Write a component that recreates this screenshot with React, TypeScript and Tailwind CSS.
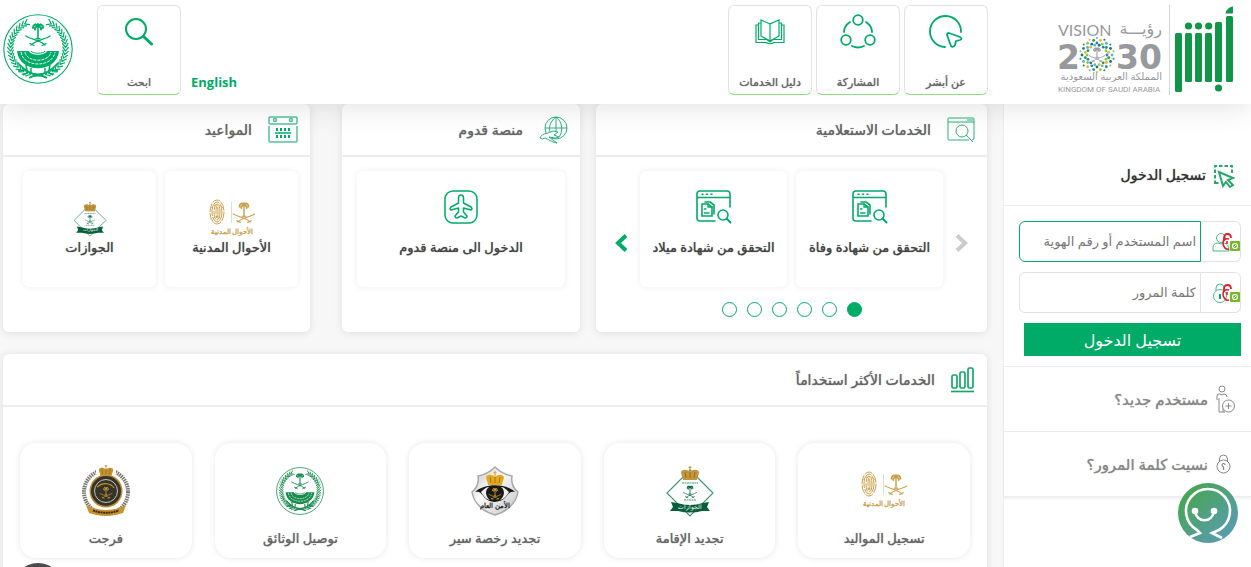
import React, { useState } from "react";
import type { ReactNode } from "react";

const GREEN = "#00ab67";

/* Palm over crossed swords, drawn in a 24x24 area centred on 0,0 */
const PalmSwords = ({ color, transform }: { color: string; transform?: string }) => (
  <g transform={transform} fill="none" stroke={color} strokeLinecap="round">
    <path d="M0 -7V4" strokeWidth="1.600" />
    <path
      d="M0 -8.500C-2 -12 -5 -10.500 -5 -7M0 -8.500C2 -12 5 -10.500 5 -7M0 -8.500C-2 -9 -3.500 -7 -3 -5.500M0 -8.500C2 -9 3.500 -7 3 -5.500M-2.500 -10.500L0 -8.500L2.500 -10.500M0 -8V-11"
      strokeWidth="2"
    />
    <path d="M-12 1C-8 4 1 5 7 10M12 1C8 4 -1 5 -7 10" strokeWidth="1.300" />
    <path d="M-8 8.500L-4 10.500M8 8.500L4 10.500M-2 3.600H2" strokeWidth="1.300" />
  </g>
);

const LEAVES = Array.from({ length: 19 }, (_, i) => 108 + i * 7.5);

const MinistryEmblem = ({ size, color }: { size: number; color: string }) => (
  <svg width={size} height={size} viewBox="0 0 70 70" fill="none" stroke={color}>
    <circle cx="35" cy="35" r="34.200" strokeWidth="1.100" />
    {[1, -1].map(side => (
      <g key={side} transform={side === 1 ? undefined : "matrix(-1 0 0 1 70 0)"}>
        {LEAVES.map(a => {
          const r = (a * Math.PI) / 180;
          return (
            <g key={a} transform={`translate(${35 + 27.5 * Math.cos(r)} ${34 + 27.5 * Math.sin(r)}) rotate(${a + 90})`}>
              <path d="M-1 0L3 -2.800M-1 0L3 2.800" strokeWidth="1.200" strokeLinecap="round" />
            </g>
          );
        })}
        <path d="M43 59C33 63 23 58 15 49M43 63C35 60 30 62 26 64M22 56L15 57M26 58L20 61M24 56L23 51M28 58L28 54" strokeWidth="1.500" />
      </g>
    ))}
    <PalmSwords color={color} transform="translate(35 21)" />
    <path d="M14 37H26C28 42 42 42 44 37H56C54 60 16 60 14 37Z" fill={color} stroke="none" />
    <path d="M18 38C20 54 50 54 52 38M22 38C24 49 46 49 48 38" stroke="#fff" strokeWidth="0.900" strokeDasharray="3 1" />
    <path d="M28 37C30 40 40 40 42 37" strokeWidth="1" />
  </svg>
);

const AbsherLogo = () => (
  <svg width="60" height="88" viewBox="0 0 60 88" role="img" aria-label="أبشر">
    <g fill="#119548">
      <rect x="1" y="28" width="7" height="59" rx="1.500" />
      <rect x="11" y="28" width="7" height="49" rx="1.500" />
      <rect x="21" y="28" width="7" height="49" rx="1.500" />
      <rect x="31" y="28" width="7" height="49" rx="1.500" />
      <rect x="41" y="17" width="7" height="60" rx="1.500" />
      <rect x="52" y="11" width="7" height="66" rx="1.500" />
      <path d="M51.500 8.500C52 5 55 2 59 1.500V7.500Q59 8.500 58 8.500Z" />
      <circle cx="14.500" cy="21" r="3.600" />
      <circle cx="24.500" cy="21" r="3.600" />
      <circle cx="34.700" cy="21" r="3.600" />
      <circle cx="44.500" cy="83" r="3.600" />
    </g>
  </svg>
);

const DOT_COLORS = ["#2f7fae", "#8dc63f", "#1c9a56", "#e9b23c", "#55b9c9", "#1f6f8d"];

const VisionLogo = () => (
  <svg width="106" height="76" viewBox="0 0 106 76" direction="ltr" role="img" aria-label="Vision 2030" fontFamily="'Noto Sans', 'DejaVu Sans', sans-serif">
    <g fill="#97999c">
      <text x="1" y="18" fontSize="16" fontFamily="Lato, sans-serif">VISION</text>
      <text x="105" y="16" fontSize="16" textAnchor="end">رؤيـــة</text>
      <text x="0" y="51" fontSize="33" fontWeight="700" fontFamily="'DejaVu Sans', sans-serif">2</text>
      <text x="59" y="51" fontSize="33" fontWeight="700" fontFamily="'DejaVu Sans', sans-serif">30</text>
      <text x="105" y="62" fontSize="10" textAnchor="end">المملكة العربية السعودية</text>
      <text x="1" y="74" fontSize="8" fontFamily="Roboto, sans-serif">KINGDOM OF SAUDI ARABIA</text>
    </g>
    {[10, 12, 15, 17].map((r, ring) =>
      Array.from({ length: 14 }, (_, i) => {
        const a = ((i + (ring % 2) / 2) * 2 * Math.PI) / 14;
        return (
          <circle
            key={`${r}-${i}`}
            cx={40 + r * Math.cos(a)}
            cy={37 + r * Math.sin(a)}
            r={ring === 3 ? 1 : 1.4}
            fill={DOT_COLORS[(i + ring * 2) % DOT_COLORS.length]}
          />
        );
      })
    )}
    <PalmSwords color="#97999c" transform="translate(40 37) scale(0.650)" />
  </svg>
);

const Crown = ({ color, transform }: { color: string; transform: string }) => (
  <g transform={transform}>
    <path d="M-7 5L-9 -1C-9 -5 -3 -5 0 -2C3 -5 9 -5 9 -1L7 5Z" fill={color} />
    <path d="M0 -8V-2M-1.500 -6.500H1.500" stroke={color} strokeWidth="1.200" />
    <path d="M-5 -2L-4 4M5 -2L4 4M0 -2V4" stroke="#8a5f1a" strokeWidth="0.700" />
    <path d="M-7 5H7" stroke={color} strokeWidth="2" />
  </g>
);

const CivilAffairsLogo = () => (
  <svg width="46" height="40" viewBox="0 0 46 40" direction="ltr" fill="none" stroke="#c9a04b">
    {[1, 3, 5, 7].map(r => (
      <ellipse key={r} cx="8" cy="13" rx={r} ry={r + 5} strokeWidth="1" strokeDasharray="9 1" />
    ))}
    <path d="M2 9C4 5 12 5 14 9M4 20C6 17 10 17 12 20" strokeWidth="0.700" />
    <path d="M22.500 3V24" stroke="#e8dcc3" />
    <PalmSwords color="#c9a04b" transform="translate(35 14) scale(0.900)" />
    <text x="23" y="35" fontSize="7" textAnchor="middle" stroke="#c9a04b" strokeWidth="0.300" fill="#c9a04b" fontFamily="'Noto Sans', sans-serif">
      الأحوال المدنية
    </text>
  </svg>
);

const PassportsLogo = ({ size }: { size: number }) => (
  <svg width={size} height={size} viewBox="0 0 52 52" direction="ltr" fill="none">
    <path d="M26 5L49 28L26 51L3 28Z" stroke="#3a9270" strokeWidth="1.100" fill="#fff" />
    <Crown color="#c2943c" transform="translate(26 9)" />
    <path d="M18 18H34M20 35H32" stroke="#86b8a2" strokeWidth="1.500" strokeDasharray="2 0.500" />
    <PalmSwords color="#0b6b43" transform="translate(26 27) scale(0.550)" />
    <path d="M7 37L13 38Q26 42 39 38L45 37L43 42L46 46L38 46Q26 49 14 46L6 46L9 42Z" fill="#075e3a" />
    <text x="26" y="44" fontSize="6" textAnchor="middle" fill="#fff" fontFamily="'Noto Sans', sans-serif">الجوازات</text>
  </svg>
);

const PublicSecurityLogo = () => (
  <svg width="52" height="52" viewBox="0 0 52 52" direction="ltr" fill="none">
    <defs>
      <linearGradient id="shield" x1="0" y1="0" x2="1" y2="1">
        <stop offset="0" stopColor="#bdbdbd" />
        <stop offset="0.400" stopColor="#fafafa" />
        <stop offset="1" stopColor="#c4c4c4" />
      </linearGradient>
    </defs>
    <path d="M26 2C31 7 37 10 43 11C42 17 44 23 49 27C47 39 37 47 26 50C15 47 5 39 3 27C8 23 10 17 9 11C15 10 21 7 26 2Z" fill="url(#shield)" stroke="#a8a8a8" strokeWidth="1.500" />
    <Crown color="#e5a91f" transform="translate(26 14)" />
    <path d="M6 27C15 18 37 18 46 27C37 25 40 36 26 37C12 36 15 25 6 27Z" fill="#191919" />
    <path d="M12 27C16 23 18 22 20 22C15 26 17 32 21 35C16 34 14 30 12 27ZM40 27C36 23 34 22 32 22C37 26 35 32 31 35C36 34 38 30 40 27Z" fill="#eee" />
    <PalmSwords color="#dda72b" transform="translate(26 29) scale(0.500)" />
    <text x="26" y="43" fontSize="7" fontWeight="700" textAnchor="middle" fill="#222" fontFamily="'Noto Sans', sans-serif">الأمن العام</text>
  </svg>
);

const PrisonsLogo = () => (
  <svg width="52" height="52" viewBox="0 0 52 52" fill="none">
    <circle cx="26" cy="27" r="22" stroke="#77746c" strokeWidth="4" strokeDasharray="1.500 0.800" />
    <path d="M16 0H36V9H16Z" fill="#fff" />
    <circle cx="26" cy="26" r="16.500" fill="#b98a35" />
    <circle cx="26" cy="26" r="15" fill="#35342a" />
    <circle cx="26" cy="26" r="11.500" stroke="#c8c4b4" strokeWidth="1" />
    <Crown color="#c4922f" transform="translate(26 6) scale(0.800)" />
    <path d="M17 22C23 17 31 18 34 23" stroke="#c4922f" strokeWidth="1.200" />
    <PalmSwords color="#d19a35" transform="translate(26 28) scale(0.500)" />
    <path d="M6 40Q26 50 46 40L43 48Q26 54 9 48Z" fill="#c4922f" />
    <path d="M13 45.500Q26 50 39 45.500" stroke="#3b2b0c" strokeWidth="2" strokeDasharray="2 0.600" />
  </svg>
);

const CertificateIcon = () => (
  <svg width="36" height="34" viewBox="0 0 36 34" fill="none" stroke={GREEN} strokeWidth="1.600" strokeLinecap="round">
    <path d="M19 31H4Q1 31 1 28V4Q1 1 4 1H31Q34 1 34 4V17M1 7.500H34" />
    <path d="M6 4.200H7M10.500 4.200H11.500M15 4.200H16" />
    <path d="M6 14H12L16 17V26H6Z" />
    <path d="M9 12H14L18 15V24" />
    <path d="M12 14V17H16M8.500 19H10M8.500 23H13" strokeWidth="1.300" />
    <circle cx="27" cy="25" r="5" />
    <path d="M31 29L34.500 32.500" strokeWidth="2" />
  </svg>
);

const Card = ({ label, icon, className = "" }: { label: string; icon: ReactNode; className?: string }) => (
  <a href="#" className={`flex h-[116px] flex-col items-center rounded-md bg-white pt-4 shadow-[0_0_6px_rgba(0,0,0,0.08)] ${className}`}>
    <span className="flex h-10 items-center">{icon}</span>
    <span className="mt-2 whitespace-nowrap text-[13px] leading-6 text-[#444] [text-shadow:0_0_1px_currentColor]">{label}</span>
  </a>
);

const Panel = ({ title, icon, className = "", children }: { title: string; icon: ReactNode; className?: string; children: ReactNode }) => (
  <section className={`rounded-md bg-white shadow-[0_1px_8px_rgba(0,0,0,0.1)] ${className}`}>
    <h2 className="flex h-[53px] items-center gap-4 border-b-2 border-[#ececec] px-3 text-sm text-[#666] [text-shadow:0_0_1px_currentColor]">
      {icon}
      {title}
    </h2>
    {children}
  </section>
);

const NavCard = ({ label, icon }: { label: string; icon: ReactNode }) => (
  <a href="#" className="flex h-[90px] w-[84px] flex-col items-center justify-between rounded-md border border-[#e2e2e2] border-b-[#8be07c] pt-1 pb-1 text-[#666]">
    <span className="flex h-11 items-center">{icon}</span>
    <span className="whitespace-nowrap text-[11px] leading-4 [text-shadow:0_0_1px_currentColor]">{label}</span>
  </a>
);

const ManagedBadge = () => (
  <g>
    <path d="M12 9V6Q12 2 15.500 2Q19 2 19 6" stroke="#e01f2d" strokeWidth="1.800" />
    <path d="M17 7C13 6 11 8 11 11C11 15 14 18 17 17M15 9V12" stroke="#e01f2d" strokeWidth="1.600" />
    <rect x="18" y="9" width="10" height="10" rx="1" fill="#76b82a" />
    <circle cx="23" cy="14" r="2.500" stroke="#fff" strokeWidth="1.200" />
    <path d="M22 15L24 13" stroke="#fff" />
  </g>
);

const SLIDES = [0, 1, 2, 3, 4, 5];

const MOST_USED: { label: string; icon: ReactNode }[] = [
  { label: "تسجيل المواليد", icon: <CivilAffairsLogo /> },
  { label: "تجديد الإقامة", icon: <PassportsLogo size={52} /> },
  { label: "تجديد رخصة سير", icon: <PublicSecurityLogo /> },
  { label: "توصيل الوثائق", icon: <MinistryEmblem size={48} color="#178a4c" /> },
  { label: "فرجت", icon: <PrisonsLogo /> },
];

export default function App() {
  const [slide, setSlide] = useState(0);
  const [username, setUsername] = useState("");
  const [password, setPassword] = useState("");

  return (
    <div dir="rtl" className="flex h-screen flex-col overflow-hidden bg-[#f7f7f7] font-['Noto_Sans','DejaVu_Sans',sans-serif]">
      <header className="relative z-10 flex h-[104px] shrink-0 items-start bg-white pt-[5px] shadow-[0_0_30px_rgba(0,0,0,0.14)]">
        <div className="flex w-[263px] items-start gap-1 pr-[17px]">
          <AbsherLogo />
          <div className="flex h-[90px] items-center border-r border-gray-300 pt-3 pr-[6px]">
            <VisionLogo />
          </div>
        </div>
        <nav className="flex gap-1">
          <NavCard
            label="عن أبشر"
            icon={
              <svg width="34" height="34" viewBox="0 0 34 34" fill="none" stroke={GREEN} strokeWidth="1.800" strokeLinecap="round" strokeLinejoin="round">
                <path d="M16 32A15.500 15.500 0 1 1 32 17" />
                <path d="M20 18L31 22Q34 24 31 25L27 26L26 30Q24 33 22 31L18 20Q18 18 20 18Z" />
              </svg>
            }
          />
          <NavCard
            label="المشاركة"
            icon={
              <svg width="36" height="36" viewBox="0 0 36 36" fill="none" stroke={GREEN} strokeWidth="1.800" strokeLinecap="round">
                <circle cx="18" cy="6" r="4.800" />
                <circle cx="6" cy="26" r="4.800" />
                <circle cx="30" cy="26" r="4.800" />
                <path d="M10 8Q4 12 4 18M26 8Q32 12 32 18M12 32Q18 35 24 32" />
              </svg>
            }
          />
          <NavCard
            label="دليل الخدمات"
            icon={
              <svg width="30" height="26" viewBox="0 0 30 26" fill="none" stroke={GREEN} strokeWidth="1.200">
                <path d="M15 5L6 1V17L15 22L24 17V1L15 5V22" />
                <path d="M6 4H3.500V20.500H12L15 23L18 20.500H26.500V4H24" />
                <path d="M3.500 6H1V23.500H11Q15 26 19 23.500H29V6H26.500" />
              </svg>
            }
          />
        </nav>
        <div className="mr-auto flex items-start pl-[3px]">
          <a href="#" className="mt-[68px] ml-[10px] font-['Open_Sans',sans-serif] text-[13px] leading-[18px] font-bold text-[#00ab67]">English</a>
          <NavCard
            label="ابحث"
            icon={
              <svg width="28" height="28" viewBox="0 0 28 28" fill="none" stroke={GREEN} strokeLinecap="round">
                <circle cx="11" cy="11" r="10" strokeWidth="2" />
                <path d="M18.500 18.500L26.500 26" strokeWidth="3" />
              </svg>
            }
          />
          <div className="mt-[9px] mr-6">
            <MinistryEmblem size={70} color={GREEN} />
          </div>
        </div>
      </header>

      <div className="flex min-h-0 flex-1">
        <aside className="w-[248px] shrink-0 border-l border-[#ededed] bg-white">
          <h1 className="flex h-[102px] items-end gap-2 border-b border-[#ececec] px-4 pb-4 text-sm leading-7 text-[#333] [text-shadow:0_0_1px_currentColor]">
            <svg width="21" height="24" viewBox="0 0 21 24" fill="none" stroke="#2ba66b" strokeWidth="2">
              <path d="M1 19V1H18V10M1 18H6" strokeDasharray="3.500 2" />
              <path d="M5 7L19 13L14 15L19 20L16 22L12 17L9 21Z" fill="#fff" />
            </svg>
            تسجيل الدخول
          </h1>
          <form className="pt-[15px] pr-[10px] pl-[15px]" onSubmit={e => e.preventDefault()}>
            <div className="mb-[10px] flex h-[41px]">
              <label htmlFor="username" aria-label="اسم المستخدم" className="flex w-10 shrink-0 items-center rounded-r-md border border-l-0 border-[#e2e2e2]">
                <svg width="28" height="20" viewBox="0 0 28 20" fill="none">
                  <g stroke="#43bd8c">
                    <circle cx="9" cy="6" r="4.500" />
                    <path d="M1 19V16Q1 11 6 11Q9 13 12 11Q17 12 17 19Z" />
                  </g>
                  <ManagedBadge />
                </svg>
              </label>
              <input
                id="username"
                type="text"
                value={username}
                onChange={e => setUsername(e.target.value)}
                placeholder="اسم المستخدم أو رقم الهوية"
                className="min-w-0 flex-1 rounded-l-md border border-[#00ab67] px-1 text-[13px] outline-none placeholder:text-[#777]"
              />
            </div>
            <div className="mb-[10px] flex h-[41px]">
              <label htmlFor="password" aria-label="كلمة المرور" className="flex w-10 shrink-0 items-center rounded-r-md border border-l-0 border-[#e2e2e2]">
                <svg width="28" height="20" viewBox="0 0 28 20" fill="none">
                  <g stroke="#43bd8c">
                    <path d="M4 8V5Q4 1 8 1Q12 1 12 5V8" />
                    <circle cx="8" cy="13" r="6.500" />
                    <path d="M8 11V16" stroke={GREEN} strokeWidth="2" />
                  </g>
                  <ManagedBadge />
                </svg>
              </label>
              <input
                id="password"
                type="password"
                value={password}
                onChange={e => setPassword(e.target.value)}
                placeholder="كلمة المرور"
                className="min-w-0 flex-1 rounded-l-md border border-[#e2e2e2] px-1 text-[13px] outline-none placeholder:text-[#777]"
              />
            </div>
            <button type="submit" className="mb-[10px] block h-[33px] w-[217px] bg-[#00ab67] text-base leading-8 text-white">
              تسجيل الدخول
            </button>
          </form>
          <div className="border-b border-[#ededed] shadow-[0_2px_2px_rgba(0,0,0,0.06)]">
            <a href="#" className="flex h-[65px] items-center gap-2 border-t border-[#ececec] px-4 text-[15px] text-[#888] [text-shadow:0_0_1px_currentColor]">
              <svg width="19" height="28" viewBox="0 0 19 28" fill="none" stroke="#888">
                <circle cx="6" cy="4" r="3" />
                <path d="M1 15V11Q1 8 4 9Q6 11 8 9Q11 9 11 12M3 13V27H7M9 27H7V20" />
                <circle cx="12.500" cy="21" r="6" fill="#fff" />
                <path d="M9.500 21H15.500M12.500 18V24" />
              </svg>
              مستخدم جديد؟
            </a>
            <a href="#" className="flex h-[65px] items-center gap-2 border-t border-[#ececec] pr-5 pl-4 text-[15px] text-[#888] [text-shadow:0_0_1px_currentColor]">
              <svg width="15" height="20" viewBox="0 0 15 20" fill="none" stroke="#888">
                <path d="M3.500 7V5Q3.500 1 7.500 1Q11.500 1 11.500 5V7" />
                <circle cx="7.500" cy="12.500" r="6.500" />
                <path d="M9 11Q9 9.500 7.500 9.500Q6 9.500 6 11Q6 12 7.500 13V16" strokeWidth="1.200" />
              </svg>
              نسيت كلمة المرور؟
            </a>
          </div>
        </aside>

        <main className="min-w-0 flex-1 pr-4 pl-[3px]">
          <div className="grid grid-cols-[391fr_238fr_323fr] gap-x-4">
            <Panel
              title="الخدمات الاستعلامية"
              className="h-[228px]"
              icon={
                <svg width="28" height="26" viewBox="0 0 28 26" fill="none" stroke="#2bb27c">
                  <path d="M22 23H2Q1 23 1 22V2Q1 1 2 1H26Q27 1 27 2V22L25 23M1 5H27M20 3H26" />
                  <circle cx="15" cy="14" r="6" />
                  <path d="M19 18L26 25" />
                </svg>
              }
            >
              <div className="flex items-center px-[18px] pt-[14px]">
                <button type="button" aria-label="السابق" onClick={() => setSlide(s => Math.max(0, s - 1))} className="w-[15px] pt-7 text-[#ccc]">
                  <svg width="15" height="18" viewBox="0 0 15 18" fill="none" stroke="currentColor" strokeWidth="4">
                    <path d="M3 1.500L11 9L3 16.500" />
                  </svg>
                </button>
                <div className="mx-[11px] flex flex-1 gap-[9px]">
                  <Card label="التحقق من شهادة وفاة" icon={<CertificateIcon />} className="flex-1" />
                  <Card label="التحقق من شهادة ميلاد" icon={<CertificateIcon />} className="flex-1" />
                </div>
                <button type="button" aria-label="التالي" onClick={() => setSlide(s => Math.min(5, s + 1))} className="w-[15px] pt-7 text-[#00ab67]">
                  <svg width="15" height="18" viewBox="0 0 15 18" fill="none" stroke="currentColor" strokeWidth="4">
                    <path d="M12 1.500L4 9L12 16.500" />
                  </svg>
                </button>
              </div>
              <div className="mt-[15px] flex justify-center gap-[10px]">
                {SLIDES.map(i => (
                  <button
                    key={i}
                    type="button"
                    aria-label={`${i + 1}`}
                    onClick={() => setSlide(i)}
                    className={`size-[15px] rounded-full border border-[#00ab67] ${i === slide ? "bg-[#00ab67]" : "bg-white"}`}
                  />
                ))}
              </div>
            </Panel>

            <Panel
              title="منصة قدوم"
              className="h-[228px]"
              icon={
                <svg width="29" height="28" viewBox="0 0 29 28" fill="none" stroke="#2bb27c">
                  <circle cx="17" cy="12" r="11" />
                  <path d="M17 1V17M17 1C10 6 10 13 11 16M17 1C24 6 24 16 20 21M6 12H28" />
                  <path d="M1 22Q2 18 9 17L14 15L19 16L15 19L20 21L16 22L10 21L18 27L14 26L6 22Q3 24 1 22Z" fill="#fff" />
                </svg>
              }
            >
              <div className="px-[15px] pt-[14px]">
                <Card
                  label="الدخول الى منصة قدوم"
                  icon={
                    <svg width="34" height="34" viewBox="0 0 34 34" fill="none" stroke={GREEN} strokeWidth="1.500" strokeLinejoin="round">
                      <rect x="1" y="1" width="32" height="32" rx="8" />
                      <path d="M17 5Q14.500 5 14.500 8V13L7 17Q5 19 7 20L14.500 18V22L11 26Q11 28 13 28L17 26L21 28Q23 28 23 26L19.500 22V18L27 20Q29 19 27 17L19.500 13V8Q19.500 5 17 5Z" />
                    </svg>
                  }
                />
              </div>
            </Panel>

            <Panel
              title="المواعيد"
              className="mr-4 h-[228px]"
              icon={
                <svg width="30" height="27" viewBox="0 0 30 27" fill="none" stroke="#55c398" strokeWidth="1.500">
                  <rect x="1" y="1" width="28" height="7" rx="1" />
                  <path d="M1 10V25Q1 26 2 26H28Q29 26 29 25V10" />
                  <circle cx="7" cy="4" r="1.500" />
                  <circle cx="23" cy="4" r="1.500" />
                  <path d="M8 13.500H22M8 20.500H22" stroke={GREEN} strokeWidth="3" strokeDasharray="2 2" />
                  <path d="M7 17H23" stroke={GREEN} />
                </svg>
              }
            >
              <div className="flex gap-[9px] pt-[14px] pr-3 pl-5">
                <Card label="الأحوال المدنية" icon={<span className="mt-6"><CivilAffairsLogo /></span>} className="flex-1" />
                <Card label="الجوازات" icon={<span className="mt-6"><PassportsLogo size={36} /></span>} className="flex-1" />
              </div>
            </Panel>
          </div>

          <Panel
            title="الخدمات الأكثر استخداماً"
            className="mt-[22px] h-[230px]"
            icon={
              <svg width="24" height="26" viewBox="0 0 24 26" fill="none" stroke="#18a668" strokeWidth="1.700">
                <rect x="1" y="8" width="5" height="13" rx="1.500" />
                <rect x="9" y="5" width="5" height="16" rx="1.500" />
                <rect x="17" y="1" width="5" height="20" rx="1.500" />
                <path d="M0 24.500H23" />
              </svg>
            }
          >
            <div className="grid grid-cols-5 gap-x-[23px] px-[17px] pt-9">
              {MOST_USED.map(item => (
                <a key={item.label} href="#" className="flex h-[115px] flex-col items-center rounded-2xl bg-white pt-[22px] shadow-[0_0_6px_rgba(0,0,0,0.1)]">
                  <span className="flex h-[52px] items-center">{item.icon}</span>
                  <span className="mt-[9px] whitespace-nowrap text-[13px] leading-6 text-[#666] [text-shadow:0_0_1px_currentColor]">{item.label}</span>
                </a>
              ))}
            </div>
          </Panel>
        </main>
      </div>

      <button type="button" aria-label="المساعد" className="fixed right-[13px] bottom-6 z-20 size-[60px]">
        <svg viewBox="0 0 60 60" fill="none" stroke="#fff" strokeWidth="2.600">
          <defs>
            <linearGradient id="chat" x1="0.200" y1="0.200" x2="0.900" y2="0.900">
              <stop offset="0" stopColor="#48a559" />
              <stop offset="1" stopColor="#5b9bb5" />
            </linearGradient>
          </defs>
          <circle cx="30" cy="30" r="30" fill="url(#chat)" stroke="none" />
          <path d="M12 54L22 50L19 47A22 22 0 1 1 41 47L34 50L44 55" />
          <path d="M17 29C20 40 33 40 36 29" />
          <circle cx="17" cy="28" r="3.300" fill="#fff" stroke="none" />
          <circle cx="36" cy="28" r="3.300" fill="#fff" stroke="none" />
        </svg>
      </button>
      <button type="button" aria-label="إمكانية الوصول" className="fixed -bottom-12 left-3 z-20 size-[52px] rounded-full bg-[#4b4a4f]" />
    </div>
  );
}
